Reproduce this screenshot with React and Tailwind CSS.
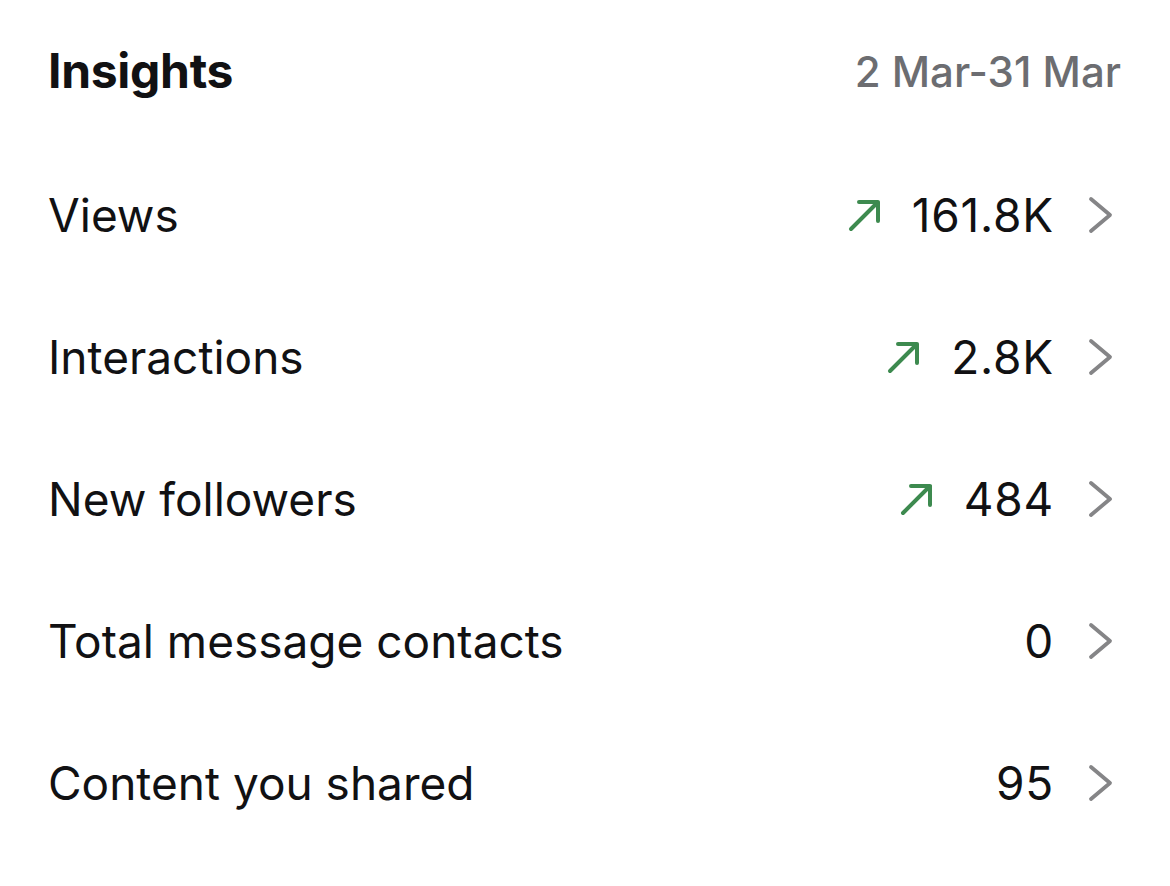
const rows = [
  { label: "Views", value: "161.8K", up: true },
  { label: "Interactions", value: "2.8K", up: true },
  { label: "New followers", value: "484", up: true },
  { label: "Total message contacts", value: "0", up: false },
  { label: "Content you shared", value: "95", up: false },
];

const TrendUp = () => (
  <svg width="34" height="34" viewBox="0 0 34 34" fill="none">
    <path
      d="M3 31 L30 4 M11 4 H30 V23"
      stroke="#3d8a4f"
      strokeWidth="4"
      strokeLinecap="round"
      strokeLinejoin="round"
    />
  </svg>
);

const Chevron = () => (
  <svg width="26" height="38" viewBox="0 0 26 38" fill="none">
    <path
      d="M3 3 L22 19 L3 35"
      stroke="#858587"
      strokeWidth="3.8"
      strokeLinecap="round"
      strokeLinejoin="round"
    />
  </svg>
);

const App = () => {
  return (
    <div className="w-[1170px] h-[886px] bg-white font-['Inter',sans-serif] text-[#111113] pl-[48px] pr-[56px]">
      <div className="flex items-center justify-between h-[144px] pb-[2px] -mr-[7px]">
        <h2 className="text-[48px] font-bold tracking-[-0.3px]">Insights</h2>
        <span className="text-[42px] font-medium text-[#6c6d71]">2 Mar-31 Mar</span>
      </div>
      {rows.map((row) => (
        <div key={row.label} className="flex items-center justify-between h-[142px]">
          <span className="text-[46px]">{row.label}</span>
          <div className="flex items-center">
            {row.up && (
              <span className="mr-[30px]">
                <TrendUp />
              </span>
            )}
            <span className="text-[46px] tracking-[0.8px]">{row.value}</span>
            <span className="ml-[34px]">
              <Chevron />
            </span>
          </div>
        </div>
      ))}
    </div>
  );
};

export default App;
